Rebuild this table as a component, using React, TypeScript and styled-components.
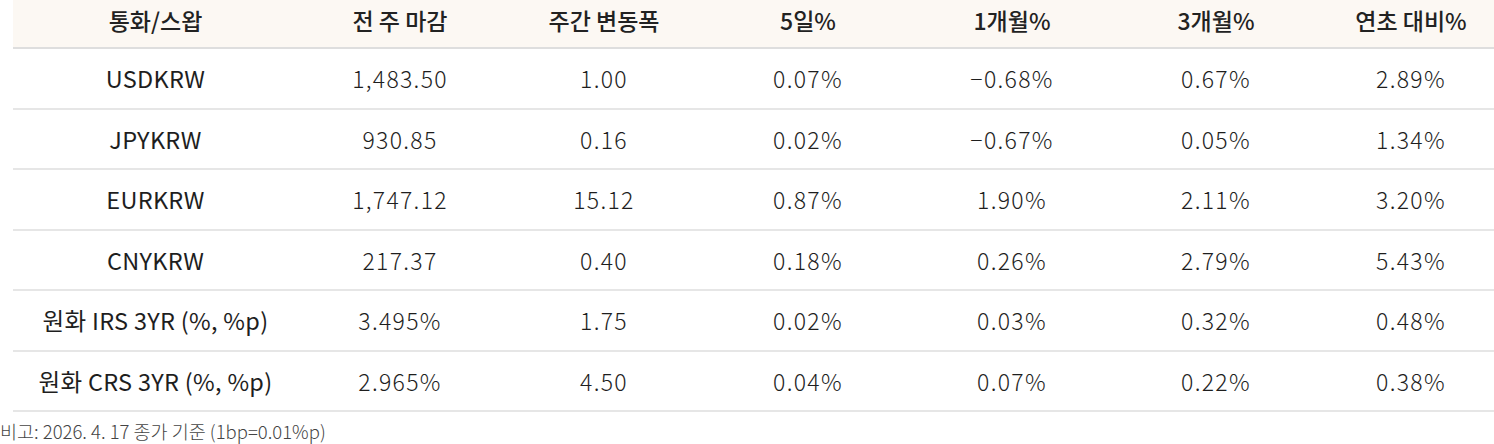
import React from "react";
import styled, { createGlobalStyle } from "styled-components";

const Global = createGlobalStyle`
  html, body { margin: 0; padding: 0; background: #ffffff; overflow: hidden; }
  body { font-family: "Noto Sans CJK KR", "Noto Sans", sans-serif; color: #222; }
`;

const Page = styled.div`
  width: 1504px;
`;

const Table = styled.div`
  margin-left: 13px;
  display: grid;
  grid-template-columns: 285px repeat(5, 204px) 1fr;
`;

const HeadCell = styled.div`
  height: 39px;
  padding-bottom: 8px;
  background: #fcf8f3;
  border-bottom: 2px solid #dedede;
  display: flex;
  align-items: center;
  justify-content: center;
  font-size: 23px;
  font-weight: 500;
  color: #222;
`;

const Cell = styled.div<{ $label?: boolean }>`
  height: 58.5px;
  border-bottom: 2px solid #e6e6e6;
  display: flex;
  align-items: center;
  justify-content: center;
  font-size: ${(p) => (p.$label ? "23.5px" : "23px")};
  letter-spacing: ${(p) => (p.$label ? "0.3px" : "1.3px")};
  font-weight: ${(p) => (p.$label ? 400 : 300)};
  color: #1e1e1e;
`;

const Note = styled.div`
  font-size: 18.5px;
  color: #444;
  padding-top: 6px;
  font-weight: 300;
`;

const headers = ["통화/스왑", "전 주 마감", "주간 변동폭", "5일%", "1개월%", "3개월%", "연초 대비%"];

const rows: string[][] = [
  ["USDKRW", "1,483.50", "1.00", "0.07%", "−0.68%", "0.67%", "2.89%"],
  ["JPYKRW", "930.85", "0.16", "0.02%", "−0.67%", "0.05%", "1.34%"],
  ["EURKRW", "1,747.12", "15.12", "0.87%", "1.90%", "2.11%", "3.20%"],
  ["CNYKRW", "217.37", "0.40", "0.18%", "0.26%", "2.79%", "5.43%"],
  ["원화 IRS 3YR (%, %p)", "3.495%", "1.75", "0.02%", "0.03%", "0.32%", "0.48%"],
  ["원화 CRS 3YR (%, %p)", "2.965%", "4.50", "0.04%", "0.07%", "0.22%", "0.38%"],
];

export default function App() {
  return (
    <Page>
      <Global />
      <Table>
        {headers.map((h) => (
          <HeadCell key={h}>{h}</HeadCell>
        ))}
        {rows.map((r, i) =>
          r.map((c, j) => (
            <Cell key={`${i}-${j}`} $label={j === 0}>
              {c}
            </Cell>
          ))
        )}
      </Table>
      <Note>비고: 2026. 4. 17 종가 기준 (1bp=0.01%p)</Note>
    </Page>
  );
}
